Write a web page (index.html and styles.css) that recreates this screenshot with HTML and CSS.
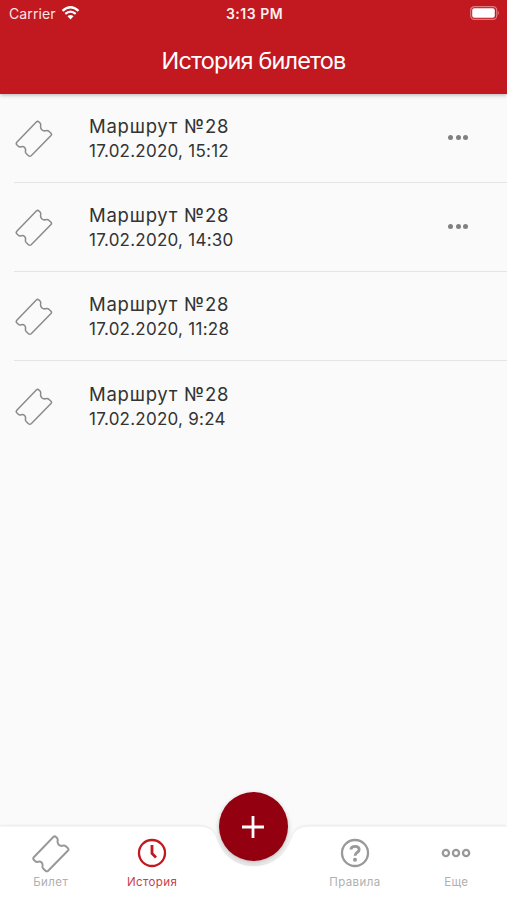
FILE: index.html
```
<!DOCTYPE html>
<html lang="ru">
  <head>
    <meta charset="UTF-8">
    <title>История билетов</title>
    <link rel="stylesheet" href="styles.css">
  </head>
  <body>
    <svg width="0" height="0" class="defs">
      <symbol id="ticket" viewBox="0 0 38 38">
        <path d="M1.8 22.2L21.3 2Q22.7 .8 24 2L25.2 3.3Q26 4.2 25.6 6C25.2 9 27.5 11.3 30.5 10.8Q32.6 10.2 33.8 11.2L36 13.3Q37 14.4 36 15.5L16.2 35.7Q14.8 36.9 13.5 35.7L11.2 33.5Q10.2 32.5 10.5 31C11 28 9 26.1 6.3 26.7Q4.4 27.3 3.3 26.2L1.8 24.8Q.7 23.5 1.8 22.2Z"/>
      </symbol>
    </svg>

    <header class="header">
      <div class="statusbar">
        <div class="carrier">
          <span>Carrier</span>
          <svg class="wifi" width="19" height="14" viewBox="0 0 18 14">
            <path d="M1 4.8Q9-2.2 17 4.8M3.8 7.8Q9 3.4 14.2 7.8"/>
            <path class="wifi-dot" d="M6 10.2Q9 7.8 12 10.2L9 13.4Z"/>
          </svg>
        </div>
        <span class="time">3:13 PM</span>
        <svg class="battery" width="31" height="14" viewBox="0 0 31 14">
          <rect class="battery-case" x="1.7" y=".7" width="26" height="12.6" rx="3.6"/>
          <rect x="3.2" y="2.2" width="22.6" height="9.6" rx="2" fill="#fff"/>
          <path d="M28.8 4.8Q31 7 28.8 9.2Z" fill="#dc7b81"/>
        </svg>
      </div>
      <h1 class="title">История билетов</h1>
    </header>

    <main class="list">
      <div class="row">
        <svg class="row-icon"><use href="#ticket"/></svg>
        <div class="row-text">
          <div class="route">Маршрут №28</div>
          <div class="date">17.02.2020, 15:12</div>
        </div>
        <div class="dots"><i></i><i></i><i></i></div>
      </div>
      <div class="row">
        <svg class="row-icon"><use href="#ticket"/></svg>
        <div class="row-text">
          <div class="route">Маршрут №28</div>
          <div class="date">17.02.2020, 14:30</div>
        </div>
        <div class="dots"><i></i><i></i><i></i></div>
      </div>
      <div class="row">
        <svg class="row-icon"><use href="#ticket"/></svg>
        <div class="row-text">
          <div class="route">Маршрут №28</div>
          <div class="date">17.02.2020, 11:28</div>
        </div>
      </div>
      <div class="row">
        <svg class="row-icon"><use href="#ticket"/></svg>
        <div class="row-text">
          <div class="route">Маршрут №28</div>
          <div class="date">17.02.2020, 9:24</div>
        </div>
      </div>
    </main>

    <nav class="tabbar">
      <svg class="tabbar-shape" width="507" height="84" viewBox="0 -10 507 84">
        <path d="M-5 .5H199C208 .5 213 4 215.500 10C222 28 234 40 254 40S286 28 292.500 10C295 4 300 .5 309 .5H512V90H-5Z"/>
      </svg>
      <a class="tab">
        <svg class="tab-ticket"><use href="#ticket"/></svg>
        <span>Билет</span>
      </a>
      <a class="tab active">
        <svg width="30" height="30" viewBox="0 0 30 30">
          <circle cx="15" cy="15" r="13"/>
          <path class="hand" d="M15 7V15.500L19 19.500"/>
        </svg>
        <span>История</span>
      </a>
      <div class="tab tab-add">
        <button class="add">
          <svg width="24" height="24" viewBox="0 0 24 24">
            <path d="M12 1V23M1 12H23"/>
          </svg>
        </button>
      </div>
      <a class="tab">
        <svg width="30" height="30" viewBox="0 0 30 30">
          <circle cx="15" cy="15" r="13"/>
          <path class="question" d="M10.800 11.500C11.500 7.200 19 7.200 19.200 11.500C19.300 14.500 15 14.500 15 17.800"/>
          <circle class="point" cx="15" cy="21.800" r="2"/>
        </svg>
        <span>Правила</span>
      </a>
      <a class="tab">
        <svg width="30" height="30" viewBox="0 0 30 30">
          <circle cx="4.900" cy="15" r="3.100"/>
          <circle cx="15" cy="15" r="3.100"/>
          <circle cx="25.100" cy="15" r="3.100"/>
        </svg>
        <span>Еще</span>
      </a>
    </nav>
  </body>
</html>
```
FILE: styles.css
```
* {
  box-sizing: border-box;
}

body {
  margin: 0;
  height: 900px;
  display: flex;
  flex-direction: column;
  background: #fafafa;
  color: #333;
  font-family: Inter, "Liberation Sans", sans-serif;
  overflow: hidden;
}

.defs {
  position: absolute;
}

/* Header */
.header {
  height: 94px;
  background: #c21820;
  color: #fff;
  box-shadow: 0 1px 4px rgba(0, 0, 0, 0.3);
}

.statusbar {
  height: 27px;
  padding: 0 7px 0 9px;
  display: grid;
  grid-template-columns: 1fr auto 1fr;
  align-items: center;
  font-size: 14px;
}

.carrier {
  display: flex;
  align-items: center;
  gap: 5px;
  color: #fbe5e6;
  letter-spacing: 0.1px;
}

.wifi {
  margin-top: -1px;
  fill: none;
  stroke: #fff;
  stroke-width: 2.3;
}

.wifi .wifi-dot {
  fill: #fff;
  stroke: none;
}

.time {
  font-size: 14px;
  font-weight: 600;
  letter-spacing: 0.5px;
  color: #fdeeee;
}

.battery {
  justify-self: end;
  margin-top: -1px;
}

.battery-case {
  fill: none;
  stroke: #dc7b81;
  stroke-width: 1.2;
}

.title {
  margin: 0;
  height: 67px;
  line-height: 67px;
  text-align: center;
  font-size: 23.5px;
  font-weight: 400;
  letter-spacing: -0.85px;
}

/* Ticket list */
.list {
  flex: 1;
}

.row {
  height: 89px;
  margin-left: 14px;
  padding-top: 2px;
  padding-right: 39px;
  display: flex;
  align-items: center;
  border-bottom: 1px solid #e4e4e4;
}

.row:last-child {
  border-bottom: none;
}

.row-icon {
  width: 38px;
  height: 38px;
  margin-left: 1px;
  fill: none;
  stroke: #8a8a8a;
  stroke-width: 1.5;
}

.row-text {
  flex: 1;
  padding-left: 36px;
  margin-top: -2px;
}

.route {
  font-size: 18.5px;
  line-height: 26px;
  letter-spacing: 0.75px;
}

.date {
  font-size: 17px;
  line-height: 24px;
  letter-spacing: 0.25px;
}

.dots {
  display: flex;
  gap: 2.400px;
  margin-top: -3px;
}

.dots i {
  width: 5px;
  height: 5px;
  border-radius: 50%;
  background: #808080;
}

/* Bottom tabs */
.tabbar {
  position: relative;
  height: 74px;
  display: grid;
  grid-template-columns: repeat(5, 1fr);
}

.tabbar-shape {
  position: absolute;
  top: -10px;
  left: 0;
  fill: #fff;
  filter: drop-shadow(0 -1px 1px rgba(0, 0, 0, 0.08));
}

.tab {
  position: relative;
  display: flex;
  flex-direction: column;
  align-items: center;
  padding-top: 12px;
  color: #b0b0b0;
  font-size: 11.500px;
  letter-spacing: 0.4px;
}

.tab svg {
  fill: none;
  stroke: #999;
  stroke-width: 2.300;
}

.tab span {
  margin-top: 7px;
  line-height: 14px;
}

.tab .tab-ticket {
  width: 38px;
  height: 38px;
  margin: -3px 0 -5px;
  stroke-width: 2;
}

.tab .question {
  stroke-width: 2.800;
}

.tab .point {
  fill: #999;
  stroke: none;
}

.active {
  color: #c8404a;
}

.active svg {
  stroke: #c21820;
}

.active .hand {
  stroke-width: 2.800;
}

.tab-add {
  padding: 0;
}

.tab .add {
  width: 69px;
  height: 69px;
  margin-top: -34px;
  padding: 0;
  display: flex;
  align-items: center;
  justify-content: center;
  border: none;
  border-radius: 50%;
  background: #930010;
  box-shadow: 0 2px 5px rgba(0, 0, 0, 0.25);
}

.tab .add svg {
  stroke: #fff;
  stroke-width: 2.800;
}
```
